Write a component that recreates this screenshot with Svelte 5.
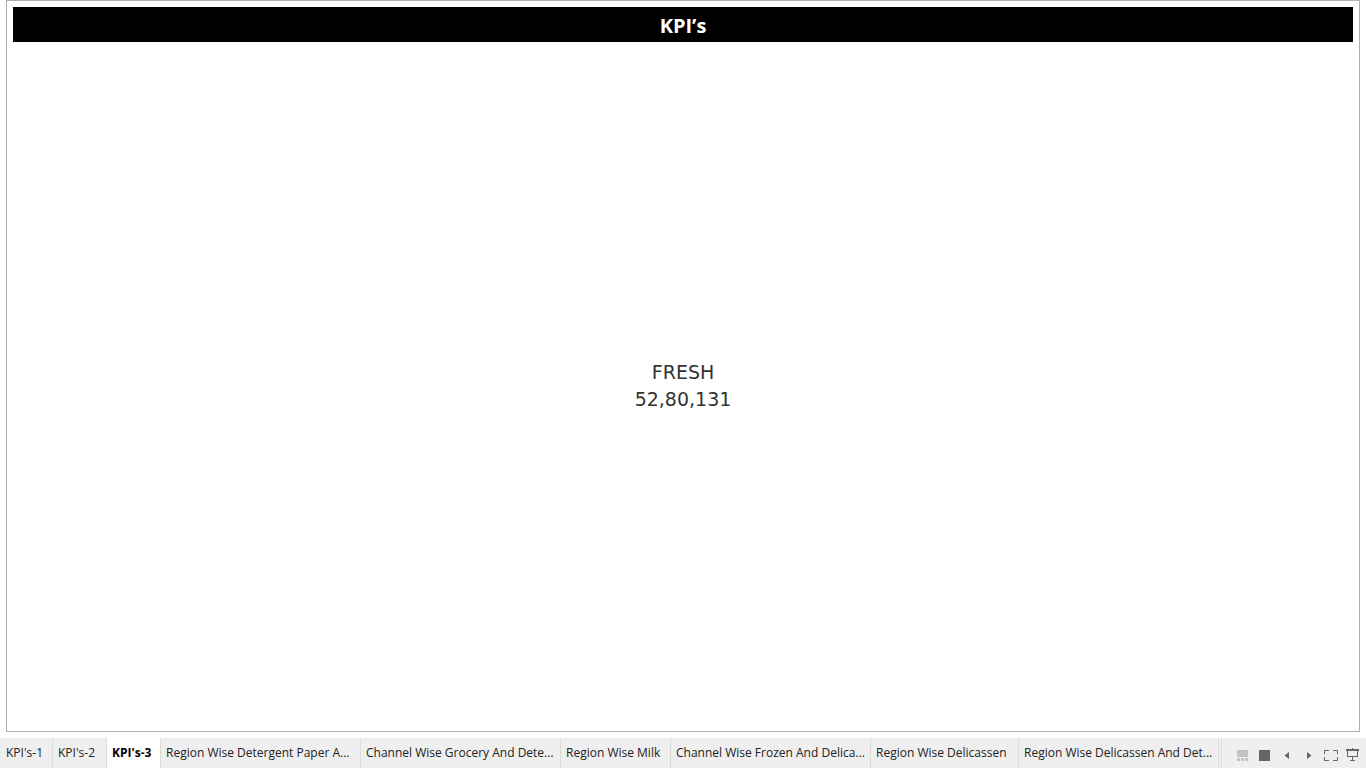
<script>
  const tabs = [
    { label: "KPI's-1", width: 52 },
    { label: "KPI's-2", width: 54 },
    { label: "KPI's-3", width: 54 },
    { label: 'Region Wise Detergent Paper A...', width: 200 },
    { label: 'Channel Wise Grocery And Dete...', width: 200 },
    { label: 'Region Wise Milk', width: 110 },
    { label: 'Channel Wise Frozen And Delica...', width: 200 },
    { label: 'Region Wise Delicassen', width: 148 },
    { label: 'Region Wise Delicassen And Det...', width: 200 },
  ];
  let active = $state(2);
</script>

<div class="page">
  <main>
    <h1>KPI’s</h1>
    <section class="kpi">
      <div>FRESH</div>
      <div>52,80,131</div>
    </section>
  </main>
  <footer>
    <nav aria-label="Sheets">
      {#each tabs as tab, i}
        <button class="tab" class:active={i === active} style:width="{tab.width}px" onclick={() => (active = i)}>{tab.label}</button>
      {/each}
    </nav>
    <div class="tools">
      <button class="tool" aria-label="Show filmstrip">
        <svg viewBox="0 0 16 16" shape-rendering="crispEdges" fill="#c2c2c2"><path d="M2 2h11v7H2zM2 10h3v3H2zM6 10h3v3H6zM10 10h3v3h-3z" /></svg>
      </button>
      <button class="tool" aria-label="Show tabs">
        <svg viewBox="0 0 16 16" shape-rendering="crispEdges" fill="#666"><path d="M2 2h11v11H2z" /></svg>
      </button>
      <button class="tool" aria-label="Previous sheet">
        <svg viewBox="0 0 16 16" fill="#666"><path d="M5.500 7.500 10 4v7z" /></svg>
      </button>
      <button class="tool" aria-label="Next sheet">
        <svg viewBox="0 0 16 16" fill="#666"><path d="M6 4v7l4.500-3.500z" /></svg>
      </button>
      <button class="tool" aria-label="Full screen">
        <svg viewBox="0 0 16 16" fill="none" stroke="#666"><path d="M1.500 6V2.500H6M10 2.500h4.500V6M1.500 9v3.500H6M10 12.500h4.500V9" /></svg>
      </button>
      <button class="tool" aria-label="Presentation mode">
        <svg viewBox="0 0 16 16" fill="#666" shape-rendering="crispEdges"><path d="M1 1h13v2h-1v6H8v3h2v1H5v-1h2V9H2V3H1zM3 3v5h9V3zM7 0h1v1H7z" fill-rule="evenodd" /></svg>
      </button>
    </div>
  </footer>
</div>

<style>
  :global(body) {
    margin: 0;
    background: #fff;
  }
  .page {
    display: flex;
    flex-direction: column;
    min-height: 100vh;
    font-family: "Open Sans", sans-serif;
  }
  main {
    flex: 1;
    display: flex;
    flex-direction: column;
    margin: 0 6px 6px;
    padding: 6px;
    border: 1px solid #b0b0b0;
  }
  h1 {
    margin: 0;
    padding: 5px 0 3px;
    background: #000;
    color: #fff;
    font: 700 20px/27px "Open Sans", sans-serif;
    text-align: center;
  }
  .kpi {
    flex: 1;
    display: flex;
    flex-direction: column;
    align-items: center;
    justify-content: center;
    padding-top: 4px;
    color: #333;
    font: 400 19px/27px "DejaVu Sans", sans-serif;
  }
  footer {
    display: flex;
    justify-content: space-between;
    height: 30px;
    background: #efefef;
  }
  nav {
    display: flex;
    border-right: 1px solid #dcdcdc;
  }
  .tab {
    box-sizing: border-box;
    padding: 0 0 0 5px;
    border: 0;
    border-left: 1px solid #dcdcdc;
    background: #efefef;
    color: #222;
    font: 400 12px/30px "Open Sans", sans-serif;
    text-align: left;
    white-space: nowrap;
    overflow: hidden;
  }
  .tab:first-child {
    border-left-color: #efefef;
  }
  .tab.active {
    background: #fff;
    color: #000;
    font-weight: 700;
  }
  .tools {
    flex: 1;
    display: flex;
    justify-content: flex-end;
    align-items: flex-end;
    gap: 6px;
    margin-left: 2px;
    padding: 0 5px 4px 0;
    border-left: 1px solid #dcdcdc;
  }
  .tool {
    display: block;
    padding: 0;
    border: 0;
    background: none;
  }
  .tool svg {
    display: block;
    width: 16px;
    height: 16px;
  }
</style>
